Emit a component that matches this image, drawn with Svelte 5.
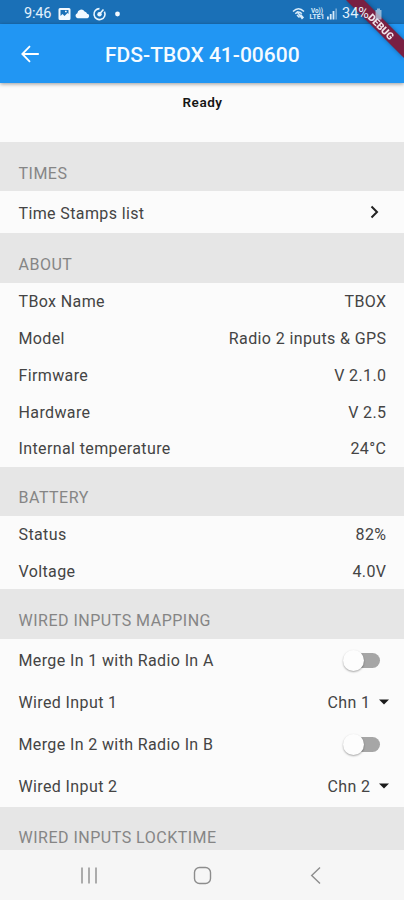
<script>
  const about = [
    ['TBox Name', 'TBOX'],
    ['Model', 'Radio 2 inputs & GPS'],
    ['Firmware', 'V 2.1.0'],
    ['Hardware', 'V 2.5'],
    ['Internal temperature', '24°C']
  ];
  const battery = [
    ['Status', '82%'],
    ['Voltage', '4.0V']
  ];
  const inputs = [
    { n: 1, radio: 'A' },
    { n: 2, radio: 'B' }
  ];
</script>

{#snippet info(label, value)}
  <div class="row"><span>{label}</span><span>{value}</span></div>
{/snippet}

<div class="screen">
  <div class="status">
    <span class="clock">9:46</span>
    <svg class="left-icons" width="68" height="24" viewBox="0 0 68 24">
      <path fill="#f2f9ff" fill-rule="evenodd" d="M4 8h9a1.500 1.500 0 0 1 1.500 1.500v9A1.500 1.500 0 0 1 13 20H4a1.500 1.500 0 0 1-1.500-1.500v-9A1.500 1.500 0 0 1 4 8zM4.500 10v6l2-2 2 2 3-3 1 1v-4zM9 10.800h1.700v1.500H9z" />
      <path fill="#f2f9ff" d="M21.500 18.200a2.600 2.600 0 0 1-.2-5 4 4 0 0 1 7.300-1.800 3.500 3.500 0 0 1 2.500 2.300 2.300 2.300 0 0 1 .4 4.500z" />
      <g fill="none" stroke="#eaf6ff" stroke-width="1.600">
        <path d="M43.500 8.600a5.500 5.500 0 1 0 4.900 3" />
        <path d="M43.500 14l4-4.500" />
      </g>
      <circle cx="43.500" cy="14.200" r="2.200" fill="#eaf6ff" />
      <circle cx="61.500" cy="14" r="2.400" fill="#f4faff" />
    </svg>
    <span class="grow"></span>
    <svg class="right-icons" width="50" height="24" viewBox="0 0 50 24">
      <g fill="none" stroke="#d9ecfa" stroke-width="1.500">
        <path d="M1 11.500q5.500-5.500 11 0M3.300 13.800q3.200-3.600 6.500 0" />
        <path d="M5 11.500l5.500 7.500M8.500 14.500l3 3.500M5 15l2.500 2.500" />
      </g>
      <text x="19" y="13.300" textLength="12" lengthAdjust="spacingAndGlyphs">Vo))</text>
      <text x="17.500" y="19.300" textLength="15" lengthAdjust="spacingAndGlyphs">LTE1</text>
      <g fill="#d9ecfa">
        <rect x="35" y="16.500" width="1.800" height="3" />
        <rect x="37.800" y="14" width="1.800" height="5.500" />
        <rect x="40.600" y="11" width="1.800" height="8.500" />
        <rect x="43.400" y="8.500" width="1.500" height="11" opacity=".5" />
      </g>
    </svg>
    <span class="percent">34%</span>
    <svg class="battery" width="9" height="24" viewBox="0 0 9 24">
      <path d="M3 8.500h3V10h1.500v9.500h-6V10H3z" fill="#b9d0e6" opacity=".75" />
    </svg>
  </div>

  <header>
    <svg class="back" width="20" height="20" viewBox="0 0 20 20" fill="none" stroke="#fff" stroke-width="1.800">
      <path d="M18.800 10H2.700M10 2.200L2.300 10l7.700 7.800" />
    </svg>
    <h1>FDS-TBOX 41-00600</h1>
  </header>

  <main>
    <div class="ready">Ready</div>
    <h2>TIMES</h2>
    <div class="row tall">
      <span>Time Stamps list</span>
      <svg class="chevron" width="10" height="14" viewBox="0 0 10 14" fill="none" stroke="#222" stroke-width="2">
        <path d="M1.500 1.500L7 7l-5.500 5.500" />
      </svg>
    </div>
    <h2>ABOUT</h2>
    {#each about as [label, value]}{@render info(label, value)}{/each}
    <h2>BATTERY</h2>
    {#each battery as [label, value]}{@render info(label, value)}{/each}
    <h2>WIRED INPUTS MAPPING</h2>
    {#each inputs as item}
      <div class="row tall">
        <span>Merge In {item.n} with Radio In {item.radio}</span>
        <span class="switch"><i></i></span>
      </div>
      <div class="row tall">
        <span>Wired Input {item.n}</span>
        <span class="select">Chn {item.n}
          <svg width="10" height="6" viewBox="0 0 10 6"><path d="M0 .500h10L5 5.500z" fill="#1b1b1b" /></svg>
        </span>
      </div>
    {/each}
    <h2>WIRED INPUTS LOCKTIME</h2>
  </main>

  <nav>
    <svg width="404" height="50" viewBox="0 0 404 50" fill="none" stroke="#8d8d8d" stroke-width="1.400">
      <path d="M82 17.500v16M89 17.500v16M96 17.500v16" />
      <rect x="194.500" y="17.500" width="16" height="16" rx="5" />
      <path d="M320 17.500l-8.300 8 8.300 8" />
    </svg>
  </nav>

  <svg class="banner" width="70" height="70" viewBox="0 0 70 70">
    <path d="M12 0h18l40 40v18z" fill="#791f42" />
    <text x="47" y="30.300" text-anchor="middle" transform="rotate(45 47 26.700)">DEBUG</text>
  </svg>
</div>

<style>
  :global(body) { margin: 0; background: #fafafa; }
  .screen {
    position: relative;
    display: flex;
    flex-direction: column;
    width: 404px;
    height: 900px;
    overflow: hidden;
    background: linear-gradient(#1a70b7 24px, #fbfbfb 24px);
    color: #444;
    font-family: Roboto, "Noto Sans", sans-serif;
    font-size: 16px;
  }
  .status {
    flex: none;
    z-index: 3;
    display: flex;
    align-items: center;
    box-sizing: border-box;
    height: 24px;
    padding: 0 21px 0 24px;
    color: #e2f1fc;
  }
  .clock { width: 32px; padding-top: 4px; font-size: 14.500px; line-height: 20px; letter-spacing: -.2px; }
  .grow { flex: 1; }
  .right-icons text { fill: #d9ecfa; font-size: 6.500px; font-weight: 700; }
  .percent { width: 32px; padding-top: 4px; font-size: 14.500px; line-height: 20px; }
  header {
    flex: none;
    z-index: 1;
    display: flex;
    align-items: center;
    box-sizing: border-box;
    height: 59px;
    padding: 1px 20px 0;
    background: #2196f3;
    box-shadow: 0 1px 4px rgba(0, 0, 0, .4);
  }
  h1 {
    margin: 0 0 0 65px;
    color: #f5fbff;
    font-size: 21px;
    font-weight: 500;
    line-height: 24px;
    padding-top: 1px;
    white-space: nowrap;
  }
  main { flex: 1; min-height: 0; overflow: hidden; }
  .ready {
    box-sizing: border-box;
    height: 59.200px;
    padding: 10px 0 0 1px;
    color: #151515;
    text-align: center;
    font-size: 13.500px;
    font-weight: 600;
    letter-spacing: .5px;
    line-height: 18px;
  }
  h2 {
    box-sizing: border-box;
    height: 49.200px;
    margin: 0;
    padding: 21.600px 18.500px 0;
    background: #e6e6e6;
    color: #858585;
    font-size: 16px;
    font-weight: 400;
    letter-spacing: .5px;
    line-height: 20px;
  }
  .row {
    display: flex;
    align-items: center;
    justify-content: space-between;
    height: 36.800px;
    padding: 0 17.600px 0 18.500px;
    letter-spacing: .38px;
  }
  .row > span:not(.switch) { position: relative; top: .8px; }
  .tall { height: 42px; }
  .chevron { margin-right: 6px; }
  .switch { width: 35px; height: 15px; margin: 1px 6px 0 0; border-radius: 8px; background: #a6a6a6; }
  .switch i {
    display: block;
    width: 21px;
    height: 21px;
    margin: -3px 0 0 -2px;
    border-radius: 50%;
    background: #fdfdfd;
    box-shadow: 0 1px 2px rgba(0, 0, 0, .35);
  }
  .select { display: flex; align-items: center; gap: 9px; margin-right: -3px; }
  nav { flex: none; height: 50px; background: #f6f6f6; }
  nav svg { display: block; }
  .banner { position: absolute; z-index: 2; top: 0; right: 0; filter: drop-shadow(0 0 2px rgba(0, 0, 0, .35)); }
  .banner text { fill: #f1e5ea; font-size: 10px; font-weight: 900; }
</style>
